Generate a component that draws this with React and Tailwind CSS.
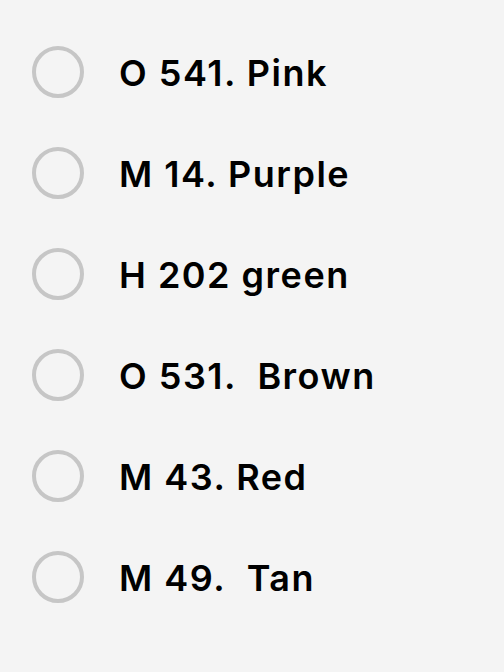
import React from "react";

const options = [
  "O 541. Pink",
  "M 14. Purple",
  "H 202 green",
  "O 531.  Brown",
  "M 43. Red",
  "M 49.  Tan",
];

export default function App() {
  return (
    <div className="min-h-[672px] w-[504px] bg-[#f4f4f4] pt-[21px] font-['Inter',sans-serif]">
      {options.map((label) => (
        <label key={label} className="flex h-[101px] items-center gap-[35px] pl-[32px]">
          <span className="h-[52px] w-[52px] shrink-0 rounded-full border-[4.5px] border-[#c6c6c6]" />
          <span className="whitespace-pre pt-[3px] text-[36px] font-semibold leading-none tracking-[1.5px] text-black">
            {label}
          </span>
        </label>
      ))}
    </div>
  );
}
